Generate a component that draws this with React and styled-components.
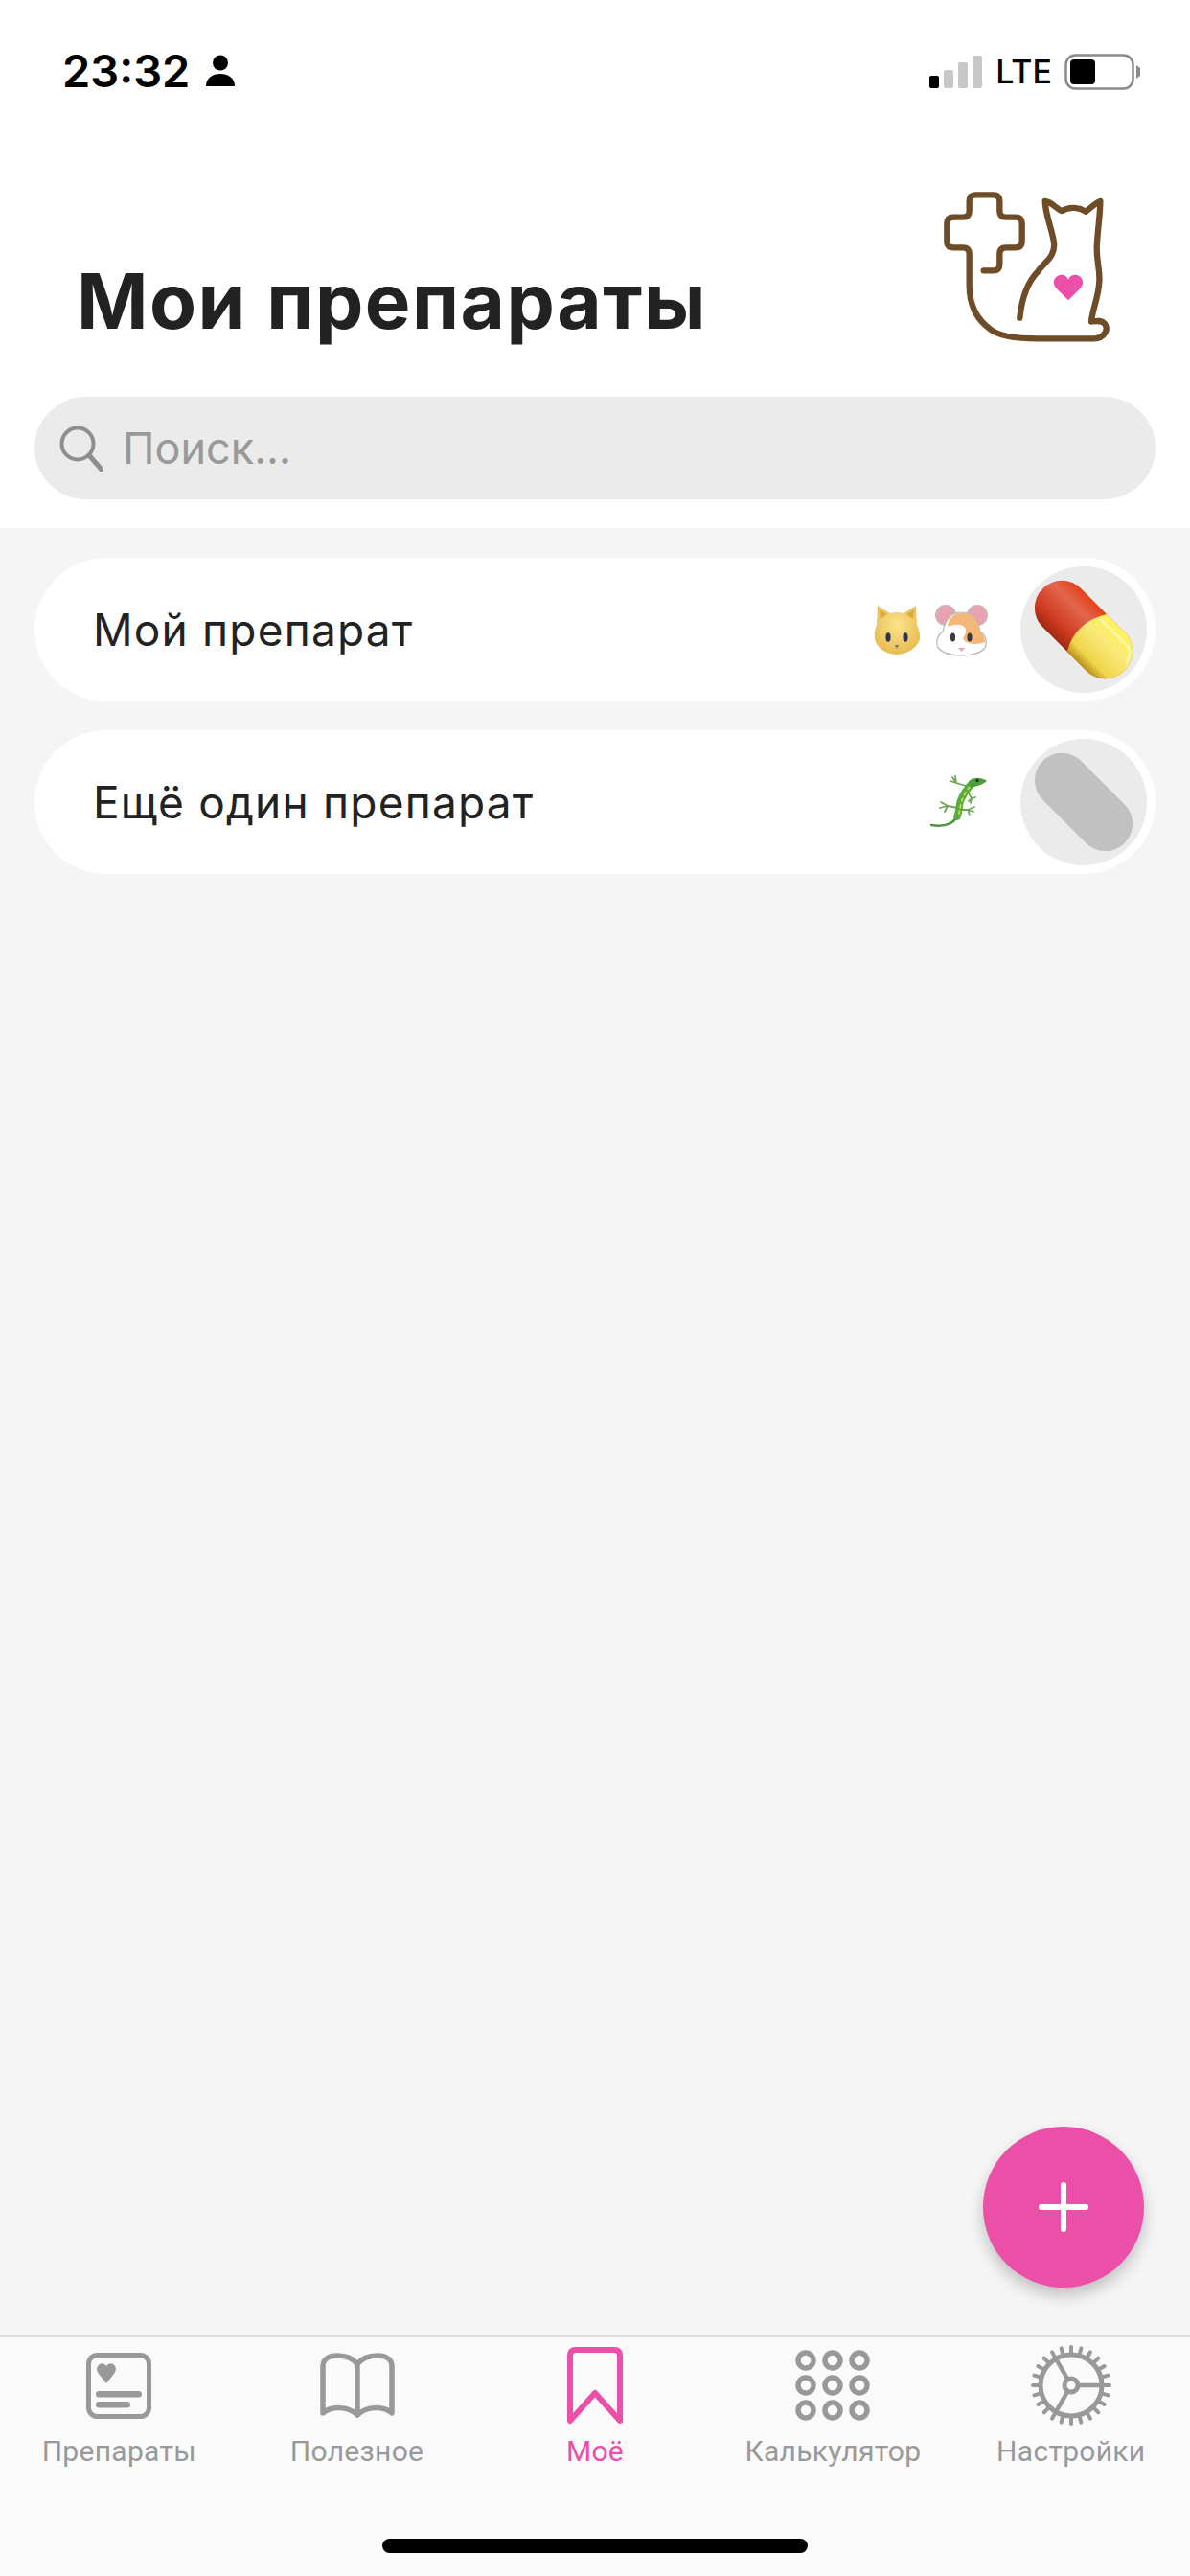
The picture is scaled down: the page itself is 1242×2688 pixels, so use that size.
import styled, { createGlobalStyle } from 'styled-components';

const PINK = '#ec4fa8';
const GRAY = '#999999';

const GlobalStyle = createGlobalStyle`
  html, body { margin: 0; padding: 0; background: #fff; }
  #root { width: 1242px; height: 2688px; overflow: hidden; }
  * { box-sizing: border-box; }
`;

const Screen = styled.div`
  position: relative;
  width: 1242px;
  height: 2688px;
  display: flex;
  flex-direction: column;
  font-family: Inter, "Liberation Sans", sans-serif;
  background: #f5f5f5;
`;

const Header = styled.header`
  height: 551px;
  flex: none;
  background: #fff;
  padding: 0 36px;
  display: flex;
  flex-direction: column;
`;

const StatusBar = styled.div`
  height: 170px;
  flex: none;
  margin: 0 -36px;
  padding: 50px 51px 0 65px;
  display: flex;
  justify-content: space-between;
  align-items: flex-start;
`;

const StatusLeft = styled.div`
  display: flex;
  align-items: center;
  gap: 17px;
`;

const Time = styled.span`
  font-size: 47px;
  line-height: 48px;
  font-weight: 600;
  color: #000;
`;

const StatusRight = styled.div`
  display: flex;
  align-items: center;
  gap: 13px;
  margin-top: 6px;
`;

const Lte = styled.span`
  font-size: 34px;
  line-height: 36px;
  font-weight: 500;
  color: #000;
`;

const TitleRow = styled.div`
  height: 244px;
  flex: none;
  padding: 0 16px 0 44px;
  display: flex;
  justify-content: space-between;
  align-items: flex-start;
`;

const Title = styled.h1`
  margin: 97px 0 0;
  font-size: 80px;
  line-height: 94px;
  font-weight: 700;
  color: #222;
  letter-spacing: 1.5px;
  white-space: nowrap;
`;

const SearchBar = styled.div`
  height: 107px;
  flex: none;
  border-radius: 54px;
  background: #ebebeb;
  padding: 0 0 0 26px;
  display: flex;
  align-items: center;
  gap: 20px;
`;

const SearchText = styled.span`
  font-size: 45px;
  line-height: 56px;
  color: #999;
`;

const List = styled.main`
  flex: 1;
  padding: 31px 36px 0;
  display: flex;
  flex-direction: column;
  gap: 30px;
`;

const Row = styled.div`
  height: 150px;
  border-radius: 75px;
  background: #fff;
  padding: 0 9px 0 61px;
  display: flex;
  align-items: center;
`;

const RowName = styled.span`
  flex: 1;
  font-size: 46px;
  line-height: 56px;
  letter-spacing: 1.2px;
  color: #222;
`;

const Emojis = styled.div`
  display: flex;
  align-items: center;
  gap: 14px;
  margin-right: 34px;
`;

const PillCircle = styled.div`
  width: 132px;
  height: 132px;
  border-radius: 50%;
  background: #ebebeb;
  flex: none;
`;

const Fab = styled.button`
  position: absolute;
  left: 1026px;
  top: 2219px;
  width: 168px;
  height: 168px;
  border: 0;
  padding: 0;
  border-radius: 50%;
  background: ${PINK};
  box-shadow: 0 8px 16px rgba(0, 0, 0, 0.22);
  display: flex;
  align-items: center;
  justify-content: center;
`;

const TabBar = styled.nav`
  height: 251px;
  flex: none;
  background: #fafafa;
  border-top: 2px solid #dcdcdc;
  padding-top: 8px;
  display: grid;
  grid-template-columns: repeat(5, 1fr);
  align-items: start;
`;

const Tab = styled.div`
  display: flex;
  flex-direction: column;
  align-items: center;
  color: ${(p) => (p.$active ? PINK : GRAY)};
`;

const TabIcon = styled.div`
  height: 84px;
  display: flex;
  align-items: center;
  justify-content: center;
`;

const TabLabel = styled.span`
  margin-top: 9px;
  font-family: Roboto, "Liberation Sans", sans-serif;
  font-size: 30px;
  line-height: 36px;
  letter-spacing: 0.3px;
  white-space: nowrap;
`;

const HomeIndicator = styled.div`
  position: absolute;
  left: 399px;
  top: 2649px;
  width: 444px;
  height: 15px;
  border-radius: 8px;
  background: #000;
`;

const PersonIcon = () => (
  <svg width="30" height="34" viewBox="0 0 30 34">
    <circle cx="15" cy="8.5" r="8" fill="#000" />
    <path d="M0 33 C0 24 7 20 15 20 C23 20 30 24 30 33 Z" fill="#000" />
  </svg>
);

const SignalIcon = () => (
  <svg width="56" height="36" viewBox="0 0 56 36">
    <rect x="0" y="22" width="10" height="13" rx="2" fill="#000" />
    <rect x="15" y="16" width="10" height="19" rx="2" fill="#c8c8c8" />
    <rect x="30" y="8" width="10" height="27" rx="2" fill="#c8c8c8" />
    <rect x="45" y="1" width="10" height="34" rx="2" fill="#c8c8c8" />
  </svg>
);

const BatteryIcon = () => (
  <svg width="80" height="38" viewBox="0 0 80 38">
    <rect x="1.5" y="1.5" width="70" height="35" rx="10" fill="none" stroke="#8a8a8a" strokeWidth="2.5" />
    <rect x="6" y="6" width="26" height="26" rx="4" fill="#000" />
    <path d="M75 12 L79 15 V23 L75 26 Z" fill="#8a8a8a" />
  </svg>
);

const SearchIcon = () => (
  <svg width="46" height="48" viewBox="0 0 46 48">
    <circle cx="19" cy="19" r="16.5" fill="none" stroke="#8e8e8e" strokeWidth="4" />
    <path d="M31 31 L44 46" stroke="#8e8e8e" strokeWidth="5" strokeLinecap="round" />
  </svg>
);

// cat + cross logo, traced on a 3x grid of the 250x200 box
const Logo = () => (
  <svg width="250" height="200" viewBox="0 0 750 600">
    <path
      d="M260 337 H290 Q310 337 310 317 V285 Q310 265 330 265 H360 Q380 265 380 245 V190 Q380 170 360 170 H330 Q310 170 310 150 V120 Q310 100 290 100 H235 Q215 100 215 120 V150 Q215 170 195 170 H165 Q145 170 145 190 V245 Q145 265 165 265 H195 Q215 265 215 285 V380 C215 450 240 490 280 520 C310 545 370 550 430 550 L605 550 C640 550 650 520 640 505 C630 490 610 495 597 497 C600 460 620 420 622 370 C625 330 610 300 615 250 C618 200 625 160 625 120 C610 125 590 145 580 152 C560 140 530 135 505 150 C490 145 470 120 452 120 C455 170 475 210 480 250 C485 295 450 310 430 340 C400 370 380 420 373 485"
      fill="none"
      stroke="#6f4c28"
      strokeWidth="19"
      strokeLinecap="round"
      strokeLinejoin="round"
    />
    <path d="M525 430 L487 392 C462 362 508 332 525 365 C542 332 588 362 563 392 Z" fill={PINK} />
  </svg>
);

const CatEmoji = () => (
  <svg width="50" height="54" viewBox="0 0 50 54">
    <defs>
      <radialGradient id="catFace" cx="50%" cy="40%" r="65%">
        <stop offset="0%" stopColor="#fbe58c" />
        <stop offset="100%" stopColor="#e6b84c" />
      </radialGradient>
    </defs>
    <path d="M4 2 L17 10 Q24 8 31 10 L44 2 L45 22 Q50 32 47 40 Q40 52 24 53 Q8 52 2 40 Q-1 32 3 22 Z" fill="url(#catFace)" />
    <path d="M6 6 L14 11 L7 16 Z M42 6 L34 11 L41 16 Z" fill="#d9ab3e" />
    <ellipse cx="15" cy="35" rx="2.6" ry="4.8" fill="#2f3550" />
    <ellipse cx="33" cy="35" rx="2.6" ry="4.8" fill="#2f3550" />
    <path d="M21.5 43 H26.5 L24 47 Z" fill="#8c7a68" />
  </svg>
);

const HamsterEmoji = () => (
  <svg width="55" height="56" viewBox="0 0 55 56">
    <circle cx="11" cy="13" r="10.5" fill="#e9a3b0" stroke="#bdbdbd" strokeWidth="1.2" />
    <circle cx="44" cy="13" r="10.5" fill="#e9a3b0" stroke="#bdbdbd" strokeWidth="1.2" />
    <path d="M27.5 10 C40 10 45 20 47 30 C52 33 55 40 52 47 C46 54 36 55 27.5 55 C19 55 9 54 3 47 C0 40 3 33 8 30 C10 20 15 10 27.5 10 Z" fill="#fff" stroke="#b5b5b5" strokeWidth="1.2" />
    <path d="M27 10.5 C40 10 45 20 47 30 C50 33 52 37 52 41 C44 44 32 44 29 37 C35 28 31 24 26 23 C18 22 15 26 13 24 C15 15 20 11 27 10.5 Z" fill="#f3b877" />
    <ellipse cx="18.5" cy="36" rx="2.6" ry="4.6" fill="#3a3a3a" />
    <ellipse cx="36" cy="36" rx="2.6" ry="4.6" fill="#3a3a3a" />
    <path d="M24 47 H31 L27.5 51 Z" fill="#f0a6b4" />
  </svg>
);

const GeckoEmoji = () => (
  <svg width="60" height="60" viewBox="0 0 60 60">
    <g fill="none" strokeLinecap="round" strokeLinejoin="round">
      <path d="M37 13 L27 10 L23 4 M27 10 L21 8 M27 10 L26 3" stroke="#6fa65a" strokeWidth="1.8" />
      <path d="M38 17 L43 26 L47 25 M43 26 L42 31 M43 26 L40 29" stroke="#6fa65a" strokeWidth="1.8" />
      <path d="M28 36 L18 34 L11 30 M18 34 L10 36 M18 34 L15 40" stroke="#6fa65a" strokeWidth="1.8" />
      <path d="M30 38 L39 38 L46 35 M39 38 L45 40 M39 38 L41 43" stroke="#6fa65a" strokeWidth="1.8" />
      <path d="M28 44 C26 50 18 57 1 54" stroke="#4f9440" strokeWidth="2.6" />
      <path d="M44 10 C38 16 34 22 31 30 C30 36 30 40 28 45" stroke="#58ab3f" strokeWidth="7.5" />
      <path d="M41 14 C37 19 34 25 32 31 C31 36 31 39 29 44" stroke="#c6dc4c" strokeWidth="1.8" strokeDasharray="3 4" />
    </g>
    <path d="M40 9 C44 4 52 3 59 8 C54 12 46 15 41 14 Z" fill="#4f9d3c" />
    <circle cx="49" cy="7.5" r="1.6" fill="#17240f" />
  </svg>
);

// capsule lying at 45deg inside the grey circle
const ColorPill = () => (
  <svg width="132" height="132" viewBox="0 0 132 132">
    <defs>
      <linearGradient id="pillRed" x1="0" y1="0" x2="0" y2="1">
        <stop offset="0%" stopColor="#e8401a" />
        <stop offset="30%" stopColor="#e2674f" />
        <stop offset="75%" stopColor="#cf3a20" />
        <stop offset="100%" stopColor="#9c2a12" />
      </linearGradient>
      <linearGradient id="pillYellow" x1="0" y1="0" x2="0" y2="1">
        <stop offset="0%" stopColor="#fff55c" />
        <stop offset="40%" stopColor="#f7e878" />
        <stop offset="80%" stopColor="#efd64a" />
        <stop offset="100%" stopColor="#b8901a" />
      </linearGradient>
      <clipPath id="pillShape">
        <rect x="5.5" y="37.5" width="121" height="57" rx="28.5" />
      </clipPath>
    </defs>
    <g transform="rotate(45 66 66)" clipPath="url(#pillShape)">
      <rect x="5.5" y="37.5" width="121" height="57" fill="url(#pillRed)" />
      <path d="M72 37.5 Q54 66 70 94.5 H126.5 V37.5 Z" fill="url(#pillYellow)" />
      <path d="M72 46 H112 Q119 48 122 58" fill="none" stroke="#fff" strokeOpacity="0.4" strokeWidth="3" strokeLinecap="round" />
    </g>
  </svg>
);

const GrayPill = () => (
  <svg width="132" height="132" viewBox="0 0 132 132">
    <rect x="5.5" y="37.5" width="121" height="57" rx="28.5" fill="#c1c1c1" transform="rotate(45 66 66)" />
  </svg>
);

const PlusIcon = () => (
  <svg width="52" height="52" viewBox="0 0 52 52">
    <path d="M26 3 V49 M3 26 H49" stroke="#fff" strokeWidth="6" strokeLinecap="round" />
  </svg>
);

const DrugsIcon = () => (
  <svg width="68" height="69" viewBox="0 0 68 69">
    <rect x="2.5" y="2.5" width="63" height="64" rx="9" fill="none" stroke={GRAY} strokeWidth="5" />
    <path d="M21 32 L13 22 C7 14 17 7 21 14 C25 7 35 14 29 22 Z" fill={GRAY} />
    <rect x="10" y="40" width="48" height="6.5" rx="3.2" fill={GRAY} />
    <rect x="10" y="51" width="36" height="6.5" rx="3.2" fill={GRAY} />
  </svg>
);

const BookIcon = () => (
  <svg width="78" height="68" viewBox="0 0 78 68">
    <path
      d="M39 12 C34 5 26 3 18 3 C9 3 3 7 3 14 V63 C11 56 29 55 39 65 C49 55 67 56 75 63 V14 C75 7 69 3 60 3 C52 3 44 5 39 12 V65"
      fill="none"
      stroke={GRAY}
      strokeWidth="5.5"
      strokeLinejoin="round"
      strokeLinecap="round"
    />
  </svg>
);

const BookmarkIcon = () => (
  <svg width="60" height="82" viewBox="0 0 60 82">
    <path
      d="M4 78 V10 Q4 4 10 4 H50 Q56 4 56 10 V78 L30 49 Z"
      fill="none"
      stroke={PINK}
      strokeWidth="6"
      strokeLinejoin="round"
    />
  </svg>
);

const GridIcon = () => (
  <svg width="78" height="74" viewBox="0 0 78 74">
    {[11, 37, 63].map((cy) =>
      [11, 39, 67].map((cx) => (
        <circle key={`${cx}-${cy}`} cx={cx} cy={cy} r="8" fill="none" stroke={GRAY} strokeWidth="5.5" />
      ))
    )}
  </svg>
);

const teeth = Array.from({ length: 24 }, (_, i) => i * 15);

const GearIcon = () => (
  <svg width="84" height="84" viewBox="0 0 84 84">
    {teeth.map((deg) => (
      <path key={deg} d="M42 10 V2" stroke={GRAY} strokeWidth="4" strokeLinecap="round" transform={`rotate(${deg} 42 42)`} />
    ))}
    <circle cx="42" cy="42" r="32" fill="none" stroke={GRAY} strokeWidth="5" />
    <circle cx="42" cy="42" r="7" fill="none" stroke={GRAY} strokeWidth="5" />
    {[90, 210, 330].map((deg) => (
      <path key={deg} d="M42 35 V10" stroke={GRAY} strokeWidth="4.5" transform={`rotate(${deg} 42 42)`} />
    ))}
  </svg>
);

const tabs = [
  { label: 'Препараты', icon: <DrugsIcon /> },
  { label: 'Полезное', icon: <BookIcon /> },
  { label: 'Моё', icon: <BookmarkIcon />, active: true },
  { label: 'Калькулятор', icon: <GridIcon /> },
  { label: 'Настройки', icon: <GearIcon /> },
];

const App = () => {
  return (
    <Screen>
      <GlobalStyle />
      <Header>
        <StatusBar>
          <StatusLeft>
            <Time>23:32</Time>
            <PersonIcon />
          </StatusLeft>
          <StatusRight>
            <SignalIcon />
            <Lte>LTE</Lte>
            <BatteryIcon />
          </StatusRight>
        </StatusBar>
        <TitleRow>
          <Title>Мои препараты</Title>
          <Logo />
        </TitleRow>
        <SearchBar>
          <SearchIcon />
          <SearchText>Поиск...</SearchText>
        </SearchBar>
      </Header>

      <List>
        <Row>
          <RowName>Мой препарат</RowName>
          <Emojis>
            <CatEmoji />
            <HamsterEmoji />
          </Emojis>
          <PillCircle>
            <ColorPill />
          </PillCircle>
        </Row>
        <Row>
          <RowName>Ещё один препарат</RowName>
          <Emojis>
            <GeckoEmoji />
          </Emojis>
          <PillCircle>
            <GrayPill />
          </PillCircle>
        </Row>
      </List>

      <Fab>
        <PlusIcon />
      </Fab>

      <TabBar>
        {tabs.map((t) => (
          <Tab key={t.label} $active={t.active}>
            <TabIcon>{t.icon}</TabIcon>
            <TabLabel>{t.label}</TabLabel>
          </Tab>
        ))}
      </TabBar>
      <HomeIndicator />
    </Screen>
  );
};

export default App;
